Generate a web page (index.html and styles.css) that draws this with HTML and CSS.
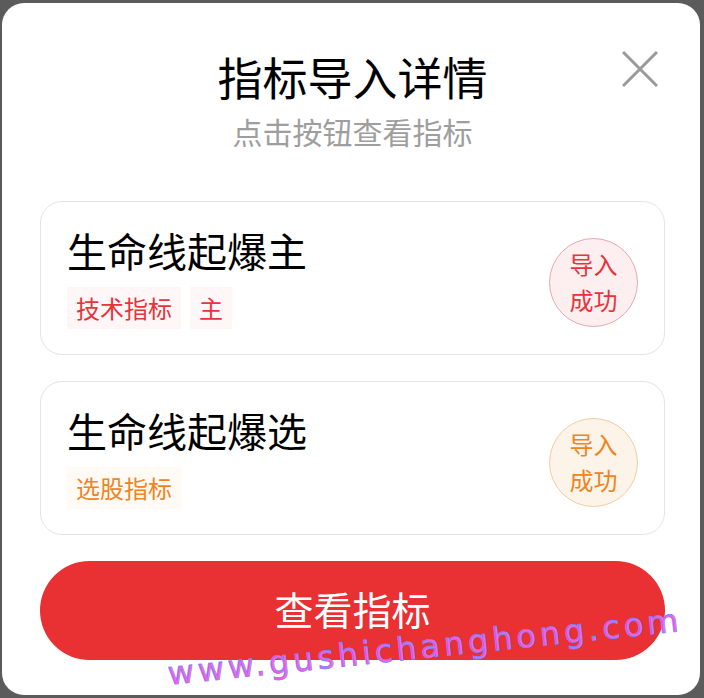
FILE: index.html
```html
<!DOCTYPE html>
<html lang="zh-CN">
<head>
    <meta charset="UTF-8" />
    <meta name="viewport" content="width=device-width, initial-scale=1" />
    <title>指标导入详情</title>
    <link rel="stylesheet" href="styles.css">
</head>
<body>
    <div class="dialog">
        <svg class="close" width="36" height="36" viewBox="0 0 36 36">
            <path d="M1 1 L35 35 M35 1 L1 35" stroke="#9a9a9a" stroke-width="3" fill="none" />
        </svg>

        <h2 class="title">指标导入详情</h2>
        <p class="subtitle">点击按钮查看指标</p>

        <div class="card">
            <div class="card-info">
                <div class="card-name">生命线起爆主</div>
                <div class="tags">
                    <span class="tag red">技术指标</span>
                    <span class="tag red">主</span>
                </div>
            </div>
            <div class="badge red">导入<br>成功</div>
        </div>

        <div class="card">
            <div class="card-info">
                <div class="card-name">生命线起爆选</div>
                <div class="tags">
                    <span class="tag orange">选股指标</span>
                </div>
            </div>
            <div class="badge orange">导入<br>成功</div>
        </div>

        <button class="view-btn">查看指标</button>

        <div class="watermark">www.gushichanghong.com</div>
    </div>
</body>
</html>
```

FILE: styles.css
```css
body { margin: 0; background: #5b5b5b; font-family: "Noto Sans CJK SC", "Noto Sans", sans-serif; }
.dialog {
    position: relative; width: 698px; height: 692px; margin: 3px 0 0 2px;
    background: #fff; border-radius: 22px; box-sizing: border-box;
    padding: 47px 35px 0 38px; overflow: hidden;
}
.close { position: absolute; top: 48px; right: 42px; }
.title { margin: 0; text-align: center; font-size: 45px; line-height: 53px; font-weight: 400; color: #000; }
.subtitle { margin: 8px 0 50px; text-align: center; font-size: 30px; line-height: 40px; color: #9e9e9e; }
.card {
    display: flex; align-items: center; justify-content: space-between;
    height: 154px; box-sizing: border-box; margin-bottom: 26px;
    border: 1px solid #e4e4e4; border-radius: 22px; padding: 0 26px 0 26px;
}
.card-info { display: flex; flex-direction: column; gap: 14px; }
.card-name { font-size: 40px; line-height: 46px; color: #000; }
.tags { display: flex; gap: 9px; }
.tag { font-size: 24px; line-height: 42px; padding: 0 9px; }
.tag.red { color: #e8333a; background: #fff7f7; }
.tag.orange { color: #f08322; background: #fffaf4; }
.badge {
    width: 89px; height: 89px; border-radius: 50%; box-sizing: border-box;
    display: flex; align-items: center; justify-content: center; text-align: center;
    font-size: 24px; line-height: 36px; margin-top: 8px;
}
.badge.red { color: #e8333a; background: #fdeff0; border: 1px solid #e4a9b0; }
.badge.orange { color: #f08322; background: #fdf4e9; border: 1px solid #f0cf9f; }
.view-btn {
    display: block; width: 625px; height: 99px; border: none; border-radius: 50px;
    background: #e93033; color: #fff; font-family: inherit; font-size: 39px; cursor: pointer;
    padding-bottom: 6px;
}
.watermark {
    position: absolute; left: 164px; top: 654px; transform: rotate(-6deg); transform-origin: left top;
    font-family: "DejaVu Sans", sans-serif; font-size: 32px; line-height: 35px; letter-spacing: 4px;
    color: #ff5ade; -webkit-text-stroke: 0.8px #7a84ff; white-space: nowrap;
}
```
